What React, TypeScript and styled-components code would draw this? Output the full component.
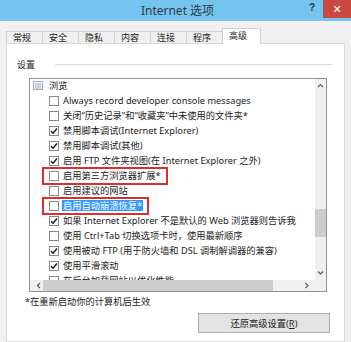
import React from 'react';
import styled, { createGlobalStyle } from 'styled-components';

const GlobalStyle = createGlobalStyle`
  html, body { margin: 0; padding: 0; }
  body { background: #f0f0f0; overflow: hidden; }
  * { box-sizing: border-box; }
`;

const UI_FONT = `"Noto Sans", "Noto Sans CJK SC", sans-serif`;

const Window = styled.div`
  width: 351px;
  height: 342px;
  overflow: hidden;
  background: #f0f0f0;
  display: flex;
  flex-direction: column;
  font-family: ${UI_FONT};
  font-size: 9px;
  color: #222;
`;

const TitleBar = styled.header`
  flex: none;
  height: 21px;
  background: #73c5ef;
  display: grid;
  grid-template-columns: 1fr auto 1fr;
  align-items: start;
`;

const Title = styled.div`
  grid-column: 2;
  font-size: 12px;
  line-height: 21px;
  color: #2f3b46;
  padding-left: 4px;
`;

const Caption = styled.div`
  grid-column: 3;
  display: flex;
  justify-content: flex-end;
  align-items: flex-start;
`;

const HelpGlyph = styled.span`
  font-family: "Liberation Sans", sans-serif;
  font-weight: bold;
  font-size: 10px;
  line-height: 16px;
  color: #1f3550;
  margin-right: 8px;
`;

const CloseButton = styled.div`
  width: 28px;
  height: 18px;
  background: #c9483f;
  color: #fff;
  display: flex;
  align-items: center;
  justify-content: center;
  font-family: "DejaVu Sans", sans-serif;
  font-size: 11px;
`;

const TabStrip = styled.nav`
  flex: none;
  height: 15px;
  margin-top: 7px;
  padding-left: 6px;
  display: flex;
  align-items: flex-end;
  position: relative;
  z-index: 1;
`;

const Tab = styled.div<{ $active?: boolean }>`
  flex: none;
  width: ${(p) => (p.$active ? 39 : 36)}px;
  height: ${(p) => (p.$active ? 16 : 12)}px;
  margin-bottom: ${(p) => (p.$active ? -1 : 0)}px;
  padding-left: 6px;
  border: 1px solid #d0d0d0;
  border-bottom: none;
  border-right-width: ${(p) => (p.$active ? 1 : 0)}px;
  background: ${(p) => (p.$active ? '#ffffff' : '#f0f0f0')};
  font-size: 9px;
  line-height: ${(p) => (p.$active ? 13 : 11)}px;
  color: #222;
  white-space: nowrap;
`;

const Panel = styled.section`
  flex: 1;
  margin: 0 6px;
  background: #ffffff;
  border: 1px solid #d9d9d9;
  padding: 15px 12px 0 10px;
  display: flex;
  flex-direction: column;
`;

const GroupHeader = styled.div`
  display: flex;
  align-items: center;
  height: 12px;
`;

const GroupLabel = styled.span`
  font-size: 9px;
  line-height: 12px;
`;

const GroupLine = styled.div`
  flex: 1;
  height: 1px;
  margin-left: 20px;
  margin-top: -1px;
  background: #dcdcdc;
`;

const ListBox = styled.div`
  margin: 7px 0 0 12px;
  width: 298px;
  height: 214px;
  border: 1px solid #8f9193;
  display: grid;
  grid-template-columns: 1fr 11px;
  grid-template-rows: 1fr 11px;
  background: #fff;
  font-size: 9.25px;
`;

const ListContent = styled.div`
  overflow: hidden;
  position: relative;
`;

const Rows = styled.div`
  margin-top: -1px;
`;

const Row = styled.div<{ $level: number }>`
  height: 15px;
  display: flex;
  align-items: center;
  padding-left: ${(p) => (p.$level === 0 ? 3 : 19)}px;
  white-space: nowrap;
`;

const ItemGroup = styled.span<{ $marked?: boolean }>`
  display: inline-flex;
  align-items: center;
  position: relative;
  &::after {
    content: '';
    display: ${(p) => (p.$marked ? 'block' : 'none')};
    position: absolute;
    left: -7px;
    right: -6px;
    top: -3px;
    bottom: -4px;
    border: 2px solid #d9302c;
  }
`;

const Box = styled.span`
  flex: none;
  width: 10px;
  height: 10px;
  border: 1px solid #8a8a8a;
  background: #fff;
  display: flex;
  align-items: center;
  justify-content: center;
`;

const ItemLabel = styled.span<{ $selected?: boolean }>`
  margin-left: 3px;
  padding: 0 1px;
  line-height: 11px;
  background: ${(p) => (p.$selected ? '#3399ff' : 'transparent')};
  color: ${(p) => (p.$selected ? '#ffffff' : '#222')};
`;

const GroupText = styled.span`
  margin-left: 6px;
  line-height: 11px;
`;

const VScroll = styled.div`
  background: #f0f0f0;
  display: flex;
  flex-direction: column;
`;

const ArrowCell = styled.div`
  flex: none;
  height: 14px;
  display: flex;
  align-items: center;
  justify-content: center;
`;

const VTrack = styled.div`
  flex: 1;
  display: flex;
  flex-direction: column;
`;

const VThumb = styled.div`
  margin-top: 116px;
  height: 28px;
  background: #cdcdcd;
`;

const HScroll = styled.div`
  background: #f0f0f0;
  display: flex;
  align-items: stretch;
`;

const HArrowCell = styled.div<{ $side: 'left' | 'right' }>`
  flex: none;
  width: 13px;
  display: flex;
  align-items: center;
  justify-content: center;
  padding-left: ${(p) => (p.$side === 'left' ? 4 : 0)}px;
  padding-right: ${(p) => (p.$side === 'right' ? 4 : 0)}px;
`;

const HTrack = styled.div`
  flex: 1;
  display: flex;
`;

const HThumb = styled.div`
  width: 230px;
  background: #cdcdcd;
`;

const Corner = styled.div`
  background: #f0f0f0;
`;

const Note = styled.div`
  margin: 4px 0 0 8px;
  line-height: 12px;
  font-size: 9.25px;
`;

const ButtonRow = styled.div`
  display: flex;
  justify-content: flex-end;
  margin-top: 5px;
  padding-right: 2px;
`;

const Button = styled.div`
  width: 132px;
  height: 20px;
  background: #e3e3e3;
  border: 1px solid #adadad;
  display: flex;
  align-items: center;
  justify-content: center;
  font-size: 9.25px;
  color: #222;
`;

const Underline = styled.span`
  text-decoration: underline;
`;

const Chevron = ({ dir }: { dir: 'up' | 'down' | 'left' | 'right' }) => {
  const paths: Record<string, string> = {
    up: 'M1 4 L3.5 1.5 L6 4',
    down: 'M1 1.5 L3.5 4 L6 1.5',
    left: 'M4 1 L1.5 3.5 L4 6',
    right: 'M1.5 1 L4 3.5 L1.5 6',
  };
  const horiz = dir === 'left' || dir === 'right';
  return (
    <svg width={horiz ? 6 : 7} height={horiz ? 7 : 6} viewBox={horiz ? '0 0 6 7' : '0 0 7 6'}>
      <path d={paths[dir]} fill="none" stroke="#606060" strokeWidth="1.2" />
    </svg>
  );
};

const CheckMark = () => (
  <svg width="8" height="8" viewBox="0 0 8 8">
    <path d="M1 4.2 L3 6.2 L7 1.5" fill="none" stroke="#1e1e1e" strokeWidth="1.5" />
  </svg>
);

const ListIcon = () => (
  <svg width="10" height="9" viewBox="0 0 10 9">
    <rect x="0.5" y="0.5" width="9" height="8" fill="#f3f6f9" stroke="#9aaec3" />
    <path d="M2 3 H8 M2 5 H8 M2 7 H8" stroke="#9aaec3" strokeWidth="0.9" />
  </svg>
);

type Item = { label: string; checked: boolean; marked?: boolean; selected?: boolean };

const items: Item[] = [
  { label: 'Always record developer console messages', checked: false },
  { label: '关闭“历史记录”和“收藏夹”中未使用的文件夹*', checked: false },
  { label: '禁用脚本调试(Internet Explorer)', checked: true },
  { label: '禁用脚本调试(其他)', checked: true },
  { label: '启用 FTP 文件夹视图(在 Internet Explorer 之外)', checked: true },
  { label: '启用第三方浏览器扩展*', checked: false, marked: true },
  { label: '启用建议的网站', checked: false },
  { label: '启用自动崩溃恢复*', checked: false, marked: true, selected: true },
  { label: '如果 Internet Explorer 不是默认的 Web 浏览器则告诉我', checked: true },
  { label: '使用 Ctrl+Tab 切换选项卡时，使用最新顺序', checked: false },
  { label: '使用被动 FTP (用于防火墙和 DSL 调制解调器的兼容)', checked: true },
  { label: '使用平滑滚动', checked: true },
  { label: '在后台加载网站以优化性能', checked: false },
];

const tabs = ['常规', '安全', '隐私', '内容', '连接', '程序', '高级'];

export default function App() {
  return (
    <>
      <GlobalStyle />
      <Window>
        <TitleBar>
          <Title>Internet 选项</Title>
          <Caption>
            <HelpGlyph>?</HelpGlyph>
            <CloseButton>✕</CloseButton>
          </Caption>
        </TitleBar>
        <TabStrip>
          {tabs.map((t, i) => (
            <Tab key={t} $active={i === tabs.length - 1}>
              {t}
            </Tab>
          ))}
        </TabStrip>
        <Panel>
          <GroupHeader>
            <GroupLabel>设置</GroupLabel>
            <GroupLine />
          </GroupHeader>
          <ListBox>
            <ListContent>
              <Rows>
                <Row $level={0}>
                  <ListIcon />
                  <GroupText>浏览</GroupText>
                </Row>
                {items.map((it) => (
                  <Row $level={1} key={it.label}>
                    <ItemGroup $marked={it.marked}>
                      <Box>{it.checked && <CheckMark />}</Box>
                      <ItemLabel $selected={it.selected}>{it.label}</ItemLabel>
                    </ItemGroup>
                  </Row>
                ))}
              </Rows>
            </ListContent>
            <VScroll>
              <ArrowCell>
                <Chevron dir="up" />
              </ArrowCell>
              <VTrack>
                <VThumb />
              </VTrack>
              <ArrowCell>
                <Chevron dir="down" />
              </ArrowCell>
            </VScroll>
            <HScroll>
              <HArrowCell $side="left">
                <Chevron dir="left" />
              </HArrowCell>
              <HTrack>
                <HThumb />
              </HTrack>
              <HArrowCell $side="right">
                <Chevron dir="right" />
              </HArrowCell>
            </HScroll>
            <Corner />
          </ListBox>
          <Note>*在重新启动你的计算机后生效</Note>
          <ButtonRow>
            <Button>
              还原高级设置(<Underline>R</Underline>)
            </Button>
          </ButtonRow>
        </Panel>
      </Window>
    </>
  );
}
